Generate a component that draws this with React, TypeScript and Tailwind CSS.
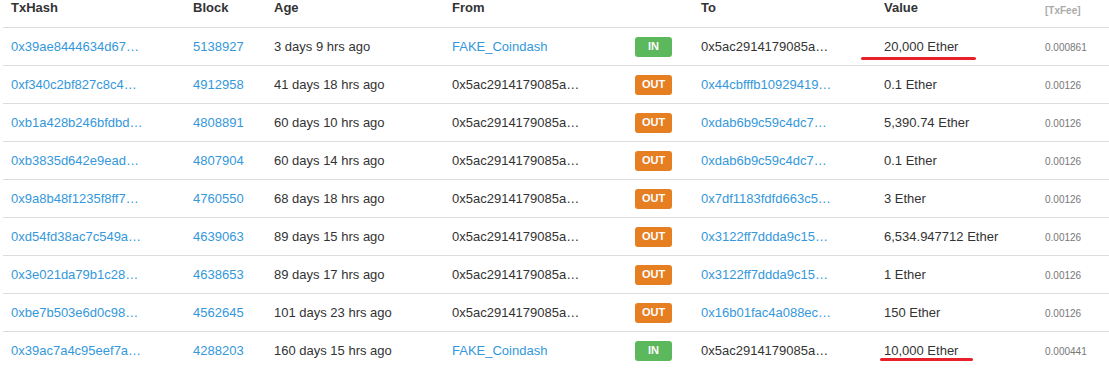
import React from "react";

type Tx = {
  hash: string;
  block: string;
  age: string;
  from: string;
  fromLink: boolean;
  dir: "IN" | "OUT";
  to: string;
  toLink: boolean;
  value: string;
  fee: string;
  mark?: string;
};

const txs: Tx[] = [
  { hash: "0x39ae8444634d67…", block: "5138927", age: "3 days 9 hrs ago", from: "FAKE_Coindash", fromLink: true, dir: "IN", to: "0x5ac2914179085a…", toLink: false, value: "20,000 Ether", fee: "0.000861", mark: "left-[-23px] w-[115px] top-[18px]" },
  { hash: "0xf340c2bf827c8c4…", block: "4912958", age: "41 days 18 hrs ago", from: "0x5ac2914179085a…", fromLink: false, dir: "OUT", to: "0x44cbfffb10929419…", toLink: true, value: "0.1 Ether", fee: "0.00126" },
  { hash: "0xb1a428b246bfdbd…", block: "4808891", age: "60 days 10 hrs ago", from: "0x5ac2914179085a…", fromLink: false, dir: "OUT", to: "0xdab6b9c59c4dc7…", toLink: true, value: "5,390.74 Ether", fee: "0.00126" },
  { hash: "0xb3835d642e9ead…", block: "4807904", age: "60 days 14 hrs ago", from: "0x5ac2914179085a…", fromLink: false, dir: "OUT", to: "0xdab6b9c59c4dc7…", toLink: true, value: "0.1 Ether", fee: "0.00126" },
  { hash: "0x9a8b48f1235f8ff7…", block: "4760550", age: "68 days 18 hrs ago", from: "0x5ac2914179085a…", fromLink: false, dir: "OUT", to: "0x7df1183fdfd663c5…", toLink: true, value: "3 Ether", fee: "0.00126" },
  { hash: "0xd54fd38ac7c549a…", block: "4639063", age: "89 days 15 hrs ago", from: "0x5ac2914179085a…", fromLink: false, dir: "OUT", to: "0x3122ff7ddda9c15…", toLink: true, value: "6,534.947712 Ether", fee: "0.00126" },
  { hash: "0x3e021da79b1c28…", block: "4638653", age: "89 days 17 hrs ago", from: "0x5ac2914179085a…", fromLink: false, dir: "OUT", to: "0x3122ff7ddda9c15…", toLink: true, value: "1 Ether", fee: "0.00126" },
  { hash: "0xbe7b503e6d0c98…", block: "4562645", age: "101 days 23 hrs ago", from: "0x5ac2914179085a…", fromLink: false, dir: "OUT", to: "0x16b01fac4a088ec…", toLink: true, value: "150 Ether", fee: "0.00126" },
  { hash: "0x39ac7a4c95eef7a…", block: "4288203", age: "160 days 15 hrs ago", from: "FAKE_Coindash", fromLink: true, dir: "IN", to: "0x5ac2914179085a…", toLink: false, value: "10,000 Ether", fee: "0.000441", mark: "left-[-4px] w-[93px] top-[15px]" },
];

const cols = "grid grid-cols-[182px_81px_178px_183px_66px_183px_161px_72px]";

export default function App() {
  return (
    <div className="w-[1109px] h-[369px] overflow-hidden bg-white font-['Liberation_Sans',Arial,sans-serif] text-[13px] text-[#333]">
      <div className="ml-[3px]">
        <div className={`${cols} h-[28px] border-b border-[#ddd] font-bold leading-[13px]`}>
          <div className="pl-2 pt-[1px]">TxHash</div>
          <div className="pl-2 pt-[1px]">Block</div>
          <div className="pl-2 pt-[1px]">Age</div>
          <div className="pl-2 pt-[1px]">From</div>
          <div />
          <div className="pl-2 pt-[1px]">To</div>
          <div className="pl-2 pt-[1px]">Value</div>
          <div className="pl-2 pt-[6px] text-[10px] leading-[10px] text-[#aaa]">[TxFee]</div>
        </div>
        {txs.map((t, i) => (
          <div key={i} className={`${cols} h-[38px] border-b border-[#ddd] items-center`}>
            <div className="pl-2 text-[#3498db]">{t.hash}</div>
            <div className="pl-2 text-[#3498db]">{t.block}</div>
            <div className="pl-2">{t.age}</div>
            <div className={t.fromLink ? "pl-2 text-[#3498db]" : "pl-2"}>{t.from}</div>
            <div className="pl-2">
              <span
                className={`flex w-[37px] h-[20px] items-center justify-center rounded-[3px] text-[11px] font-bold text-white ${
                  t.dir === "IN" ? "bg-[#5cb85c]" : "bg-[#e67e22]"
                }`}
              >
                {t.dir}
              </span>
            </div>
            <div className={t.toLink ? "pl-2 text-[#3498db]" : "pl-2"}>{t.to}</div>
            <div className="pl-2">
              <span className="relative">
                {t.value}
                {t.mark && (
                  <span className={`absolute h-[3px] rounded-full bg-[#e8202a] ${t.mark}`} />
                )}
              </span>
            </div>
            <div className="pl-2 pt-[1px] text-[10px] text-[#777]">{t.fee}</div>
          </div>
        ))}
      </div>
    </div>
  );
}
